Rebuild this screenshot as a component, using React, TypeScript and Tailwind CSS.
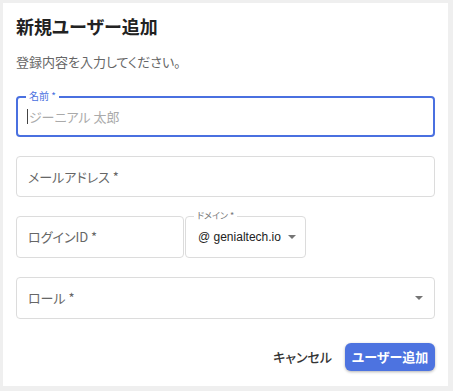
const font = "font-['Noto_Sans_CJK_JP','Noto_Sans',sans-serif] [font-feature-settings:'palt']";

function Caret() {
  return (
    <svg width="8" height="4" viewBox="0 0 8 4" className="shrink-0">
      <path d="M0 0 L8 0 L4 4 Z" fill="#757575" />
    </svg>
  );
}

export default function App() {
  return (
    <div className={`min-h-screen bg-[#efefef] pt-[3px] pl-[3px] pr-[5px] pb-[4px] ${font}`}>
      <div className="flex flex-col bg-white px-[13px] pt-[10px] pb-[15px]">
        <h1 className="text-[18px] font-bold leading-[26px] text-[#222]">新規ユーザー追加</h1>
        <p className="mt-[13px] text-[13px] leading-[20px] text-[#666]">登録内容を入力してください。</p>

        <div className="mt-[24px] flex flex-col gap-[19px]">
          {/* name, focused */}
          <div className="relative h-[41px] rounded-[4px] border-2 border-[#4a70e0]">
            <span className="absolute -top-[9px] left-[8px] bg-white px-[3px] text-[10px] leading-[14px] text-[#4a70e0]">
              名前 *
            </span>
            <div className="flex h-full items-center pl-[9px] text-[13px] text-[#aaa]">
              <span className="mr-px h-[15px] w-px bg-[#444]" />
              ジーニアル 太郎
            </div>
          </div>

          <div className="flex h-[41px] items-center rounded-[4px] border border-[#dcdcdc] pl-[11px] text-[13px] text-[#666]">
            メールアドレス *
          </div>

          <div className="flex h-[42px] gap-px">
            <div className="flex w-[168px] items-center rounded-[4px] border border-[#dcdcdc] pl-[11px] text-[13px] text-[#666]">
              ログインID *
            </div>
            <div className="relative flex w-[121px] items-center gap-[7px] whitespace-nowrap rounded-[4px] border border-[#dcdcdc] pl-[12px] text-[#222]">
              <span className="absolute -top-[8px] left-[8px] bg-white px-[3px] text-[9px] leading-[14px] text-[#777]">
                ドメイン *
              </span>
              <span className="font-['Liberation_Sans','Noto_Sans_CJK_JP',sans-serif] text-[12px]">@ genialtech.io</span>
              <Caret />
            </div>
          </div>

          <div className="flex h-[42px] items-center justify-between rounded-[4px] border border-[#dcdcdc] pl-[11px] pr-[11px] text-[13px] text-[#666]">
            <span>ロール *</span>
            <Caret />
          </div>
        </div>

        <div className="mt-[24px] flex items-center justify-end gap-[13px]">
          <button type="button" className="text-[13px] font-medium text-[#333]">
            キャンセル
          </button>
          <button
            type="button"
            className="h-[28px] w-[90px] rounded-[6px] bg-[#4d73e0] text-[13px] font-bold text-white shadow-[0_1px_3px_rgba(0,0,0,0.3)]"
          >
            ユーザー追加
          </button>
        </div>
      </div>
    </div>
  );
}
